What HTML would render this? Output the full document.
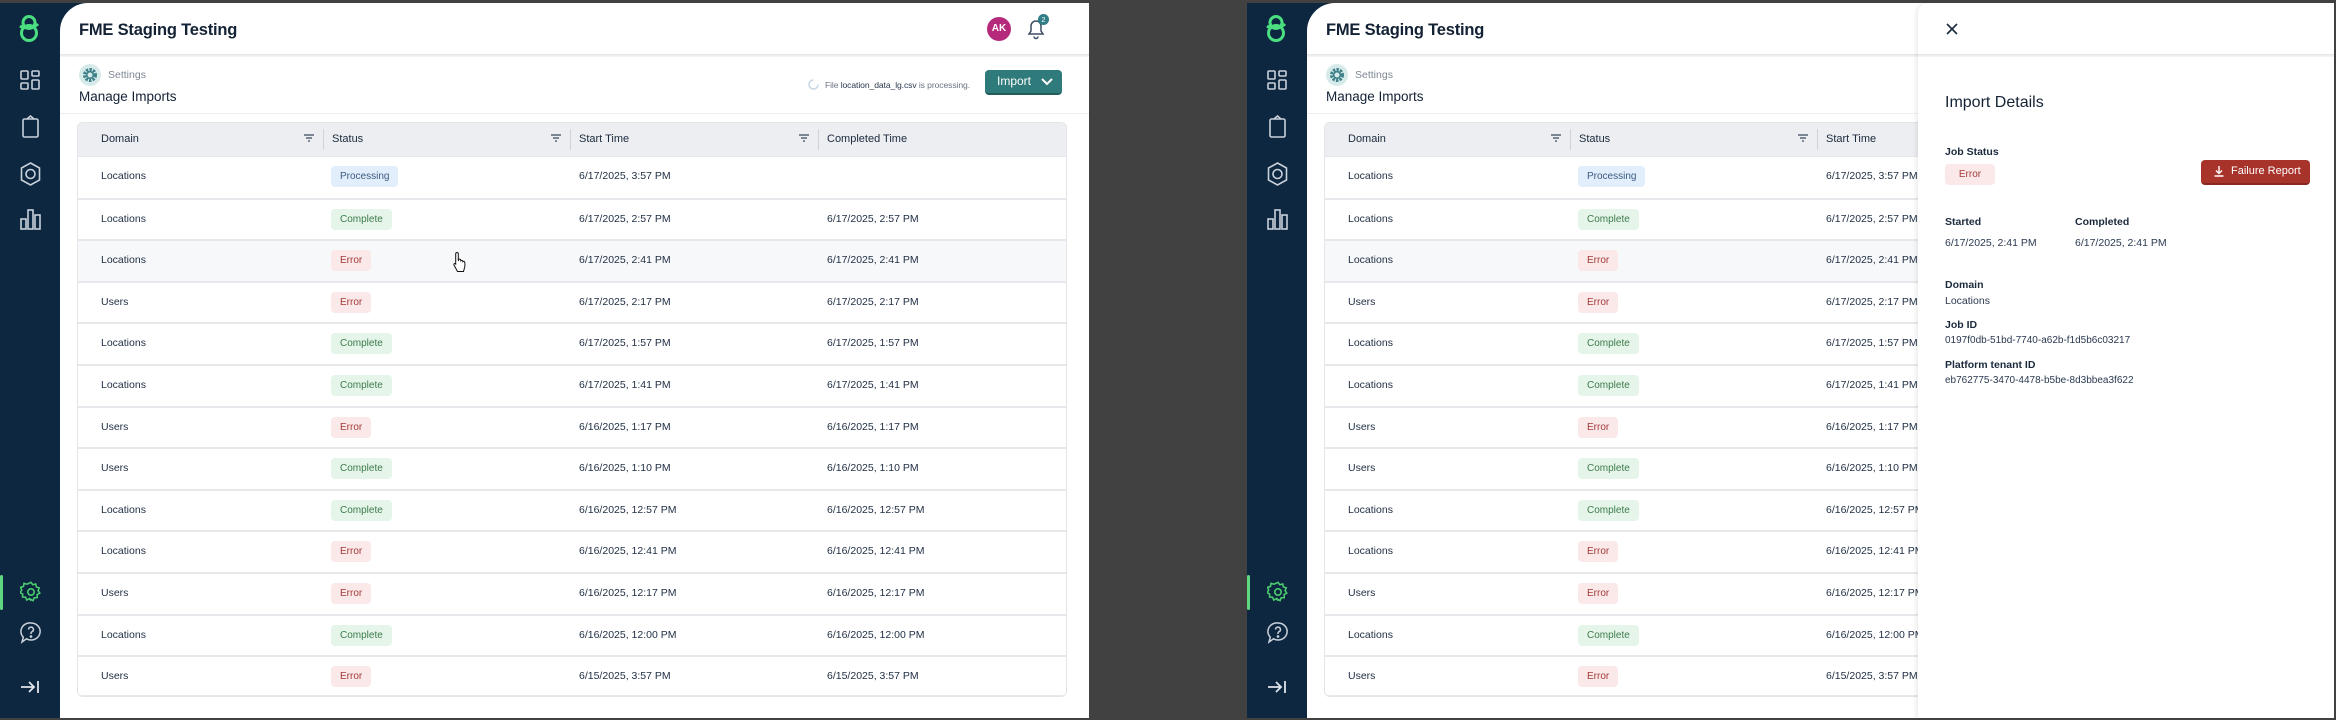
<!DOCTYPE html>
<html><head><meta charset="utf-8">
<style>
*{margin:0;padding:0;box-sizing:border-box}
body{width:2336px;height:720px;background:#414141;position:relative;overflow:hidden;font-family:"Liberation Sans",Arial,sans-serif;color:#1b2a3d}
.panel{position:absolute;top:3px;height:715px;width:1089px;background:#0e2740;overflow:hidden}
.main{position:absolute;left:60px;top:0;right:0;bottom:0;background:#fff;border-top-left-radius:28px}
.abs{position:absolute}
.hdrline{position:absolute;left:60px;right:0;top:51px;height:3px;background:linear-gradient(#e2e4e8,#f6f7f8)}
.title{position:absolute;left:79px;top:18px;font-size:16.5px;font-weight:bold;color:#142235;letter-spacing:-0.2px}
.sub{position:absolute;left:60px;right:0;top:110px;height:1px;background:#eceef1}
.table{position:absolute;left:77px;width:990px;top:119px;height:575px;border:1px solid #e3e5e9;border-radius:6px;overflow:hidden;background:#fff}
.th{position:absolute;left:0;right:0;top:0;height:33px;background:#eceef2}
.th span{position:absolute;top:10px;font-size:11px;color:#1b2a3d}
.sep{position:absolute;top:6px;width:1px;height:21px;background:#cfd3d9}
.fil{position:absolute;top:10px}
.row{position:absolute;left:0;right:0;height:41.6px;border-top:2px solid #e6e8ec}
.row span{position:absolute;top:13px;font-size:10.5px;color:#1e2d42}
.row .b{top:9px;height:21px;line-height:21px;padding:0 9px;border-radius:4px;font-size:10px}
.p{background:#e2eefb;color:#3c5a80!important}
.c{background:#e5f5e9;color:#3d7b4c!important}
.e{background:#fbe8e8;color:#a23a3a!important}
.ic{position:absolute;left:20px}
</style></head><body>

<!-- LEFT PANEL -->
<div class="panel" style="left:0">
 <svg class="abs" style="left:16px;top:11px" width="26" height="30" viewBox="0 0 26 30" fill="none" stroke="#4bde80" stroke-width="3"><circle cx="13" cy="8.5" r="6"/><circle cx="13" cy="19" r="7.5"/><path d="M4 12 C8 15 18 14 22 10"/></svg>
 <svg class="ic" style="top:67px" width="21" height="21" viewBox="0 0 21 21" fill="none" stroke="#c9d1db" stroke-width="1.6"><rect x="1" y="1" width="7" height="8" rx="1"/><rect x="12" y="1" width="7" height="5" rx="1"/><rect x="1" y="13" width="7" height="6" rx="1"/><rect x="12" y="10" width="7" height="9" rx="1"/></svg>
 <svg class="ic" style="top:112px" width="21" height="24" viewBox="0 0 21 24" fill="none" stroke="#c9d1db" stroke-width="1.6"><rect x="3" y="4" width="15" height="18" rx="1.5"/><path d="M7 4 L10.5 1 L14 4"/></svg>
 <svg class="ic" style="top:159px" width="21" height="24" viewBox="0 0 21 24" fill="none" stroke="#c9d1db" stroke-width="1.6"><path d="M10.5 1 L19.5 6 L19.5 18 L10.5 23 L1.5 18 L1.5 6 Z"/><circle cx="10.5" cy="12" r="4.5"/></svg>
 <svg class="ic" style="top:205px" width="21" height="22" viewBox="0 0 21 22" fill="none" stroke="#c9d1db" stroke-width="1.6"><rect x="1" y="11" width="5" height="10"/><rect x="8" y="2" width="5" height="19"/><rect x="15" y="7" width="5" height="14"/></svg>
 <div class="abs" style="left:0;top:572px;width:3px;height:35px;background:#5fd67f;border-radius:2px"></div>
 <svg class="ic" style="top:578px" width="22" height="22" viewBox="0 0 24 24" fill="none" stroke="#4bce6f" stroke-width="1.7"><circle cx="12" cy="12" r="3.5"/><path d="M12 1.5l2 2.6 3.2-.9.6 3.3 3.2 1-1.3 3 1.9 2.7-2.9 1.6.1 3.3-3.3.2-1.3 3.1-2.9-1.6L12 21.5l-1.7-2.3-2.9 1.6-1.3-3.1-3.3-.2.1-3.3-2.9-1.6 1.9-2.7-1.3-3 3.2-1 .6-3.3 3.2.9z"/></svg>
 <svg class="ic" style="top:618px" width="22" height="24" viewBox="0 0 22 24" fill="none" stroke="#c9d1db" stroke-width="1.5"><path d="M11 2a9 8.5 0 1 1-4.5 15.8L2 21l1.3-4.8A9 8.5 0 0 1 11 2z"/><path d="M8.6 8.5a2.4 2.4 0 1 1 3.4 2.2c-.7.4-1 .9-1 1.6v.7"/><circle cx="11" cy="15.5" r=".6" fill="#c9d1db"/></svg>
 <svg class="ic" style="top:677px" width="20" height="14" viewBox="0 0 20 14" fill="none" stroke="#dfe4ea" stroke-width="1.8"><path d="M1 7h13M9 2l5 5-5 5M18 1v12"/></svg>
 <div class="main"></div>
 <div class="hdrline"></div>
 <div class="title">FME Staging Testing</div>
 <div class="abs" style="left:987px;top:14px;width:24px;height:24px;border-radius:50%;background:#b52a7b;color:#fff;font-size:10px;font-weight:bold;text-align:center;line-height:24px">AK</div>
 <svg class="abs" style="left:1026px;top:13px" width="20" height="24" viewBox="0 0 20 24" fill="none" stroke="#3a4d63" stroke-width="1.5"><path d="M3 18h14l-2-3V10a5 5 0 0 0-10 0v5z"/><path d="M8 20.5a2 2 0 0 0 4 0"/></svg>
 <div class="abs" style="left:1038px;top:11px;width:11px;height:11px;border-radius:50%;background:#2f7d87;color:#fff;font-size:7.5px;text-align:center;line-height:11px">2</div>
 <svg class="abs" style="left:79px;top:61px" width="22" height="22" viewBox="0 0 22 22"><circle cx="11" cy="11" r="11" fill="#d6eaea"/><circle cx="11" cy="11" r="5.5" fill="none" stroke="#3e7f88" stroke-width="3" stroke-dasharray="2.4 1.2"/><circle cx="11" cy="11" r="3.3" fill="none" stroke="#3e7f88" stroke-width="1.6"/></svg>
 <div class="abs" style="left:108px;top:66px;font-size:10.5px;color:#7d8794">Settings</div>
 <div class="abs" style="left:79px;top:86px;font-size:13.5px;color:#142235">Manage Imports</div>
 <svg class="abs" style="left:808px;top:76px" width="11" height="11" viewBox="0 0 11 11" fill="none" stroke="#c7d6e2" stroke-width="1.5"><path d="M5.5 1A4.5 4.5 0 1 0 10 5.5"/></svg>
 <div class="abs" style="right:119px;top:77px;font-size:8.6px;color:#6a7482;white-space:nowrap;letter-spacing:-0.1px">File <span style="color:#2b3a4f">location_data_lg.csv</span> is processing.</div>
 <div class="abs" style="left:985px;top:67px;width:77px;height:25px;background:#2f7a7b;border-radius:4px;border-bottom:2px solid #235e5f;color:#fff;font-size:12px;line-height:23px;padding-left:12px">Import
  <svg class="abs" style="left:56px;top:8px" width="12" height="8" viewBox="0 0 12 8" fill="none" stroke="#fff" stroke-width="2"><path d="M1 1l5 5 5-5"/></svg></div>
 <div class="sub"></div>
 <div class="table">
  <div class="th">
   <span style="left:23px">Domain</span><svg class="fil" style="left:226px" width="10" height="10" viewBox="0 0 10 10" stroke="#3a4a5e" stroke-width="1.3"><path d="M0 2h10M2 5h6M4 8h2"/></svg><div class="sep" style="left:245px"></div>
   <span style="left:254px">Status</span><svg class="fil" style="left:473px" width="10" height="10" viewBox="0 0 10 10" stroke="#3a4a5e" stroke-width="1.3"><path d="M0 2h10M2 5h6M4 8h2"/></svg><div class="sep" style="left:492px"></div>
   <span style="left:501px">Start Time</span><svg class="fil" style="left:721px" width="10" height="10" viewBox="0 0 10 10" stroke="#3a4a5e" stroke-width="1.3"><path d="M0 2h10M2 5h6M4 8h2"/></svg><div class="sep" style="left:740px"></div>
   <span style="left:749px">Completed Time</span>
  </div>
  <div class="row" style="top:33px;border-top:1px solid #e6e8ec"><span style="left:23px">Locations</span><span class="b p" style="left:253px">Processing</span><span style="left:501px">6/17/2025, 3:57 PM</span></div>
  <div class="row" style="top:74.6px"><span style="left:23px">Locations</span><span class="b c" style="left:253px">Complete</span><span style="left:501px">6/17/2025, 2:57 PM</span><span style="left:749px">6/17/2025, 2:57 PM</span></div>
  <div class="row" style="top:116.2px;background:#f7f8fa"><span style="left:23px">Locations</span><span class="b e" style="left:253px">Error</span><span style="left:501px">6/17/2025, 2:41 PM</span><span style="left:749px">6/17/2025, 2:41 PM</span>
   <svg class="abs" style="left:374px;top:10px" width="16" height="22" viewBox="0 0 16 22" fill="#fff" stroke="#111" stroke-width="1"><path d="M5 1.5c.8 0 1.3.6 1.3 1.4V10l.3-1.5c.6-.7 1.8-.5 2 .4l.2.9c.5-.7 1.7-.6 2 .3v.6c.6-.6 1.7-.4 1.9.5.3 1.5.3 4-.2 5.6L11.5 20.5H5.5L2 14c-.5-.9.3-1.9 1.3-1.4L3.7 13V2.9c0-.8.5-1.4 1.3-1.4z"/></svg></div>
  <div class="row" style="top:157.8px"><span style="left:23px">Users</span><span class="b e" style="left:253px">Error</span><span style="left:501px">6/17/2025, 2:17 PM</span><span style="left:749px">6/17/2025, 2:17 PM</span></div>
  <div class="row" style="top:199.4px"><span style="left:23px">Locations</span><span class="b c" style="left:253px">Complete</span><span style="left:501px">6/17/2025, 1:57 PM</span><span style="left:749px">6/17/2025, 1:57 PM</span></div>
  <div class="row" style="top:241px"><span style="left:23px">Locations</span><span class="b c" style="left:253px">Complete</span><span style="left:501px">6/17/2025, 1:41 PM</span><span style="left:749px">6/17/2025, 1:41 PM</span></div>
  <div class="row" style="top:282.6px"><span style="left:23px">Users</span><span class="b e" style="left:253px">Error</span><span style="left:501px">6/16/2025, 1:17 PM</span><span style="left:749px">6/16/2025, 1:17 PM</span></div>
  <div class="row" style="top:324.2px"><span style="left:23px">Users</span><span class="b c" style="left:253px">Complete</span><span style="left:501px">6/16/2025, 1:10 PM</span><span style="left:749px">6/16/2025, 1:10 PM</span></div>
  <div class="row" style="top:365.8px"><span style="left:23px">Locations</span><span class="b c" style="left:253px">Complete</span><span style="left:501px">6/16/2025, 12:57 PM</span><span style="left:749px">6/16/2025, 12:57 PM</span></div>
  <div class="row" style="top:407.4px"><span style="left:23px">Locations</span><span class="b e" style="left:253px">Error</span><span style="left:501px">6/16/2025, 12:41 PM</span><span style="left:749px">6/16/2025, 12:41 PM</span></div>
  <div class="row" style="top:449px"><span style="left:23px">Users</span><span class="b e" style="left:253px">Error</span><span style="left:501px">6/16/2025, 12:17 PM</span><span style="left:749px">6/16/2025, 12:17 PM</span></div>
  <div class="row" style="top:490.6px"><span style="left:23px">Locations</span><span class="b c" style="left:253px">Complete</span><span style="left:501px">6/16/2025, 12:00 PM</span><span style="left:749px">6/16/2025, 12:00 PM</span></div>
  <div class="row" style="top:532.2px;border-bottom:2px solid #e6e8ec"><span style="left:23px">Users</span><span class="b e" style="left:253px">Error</span><span style="left:501px">6/15/2025, 3:57 PM</span><span style="left:749px">6/15/2025, 3:57 PM</span></div>
 </div>
</div>

<!-- RIGHT PANEL -->
<div class="panel" style="left:1247px;width:1087px">
 <svg class="abs" style="left:16px;top:11px" width="26" height="30" viewBox="0 0 26 30" fill="none" stroke="#4bde80" stroke-width="3"><circle cx="13" cy="8.5" r="6"/><circle cx="13" cy="19" r="7.5"/><path d="M4 12 C8 15 18 14 22 10"/></svg>
 <svg class="ic" style="top:67px" width="21" height="21" viewBox="0 0 21 21" fill="none" stroke="#c9d1db" stroke-width="1.6"><rect x="1" y="1" width="7" height="8" rx="1"/><rect x="12" y="1" width="7" height="5" rx="1"/><rect x="1" y="13" width="7" height="6" rx="1"/><rect x="12" y="10" width="7" height="9" rx="1"/></svg>
 <svg class="ic" style="top:112px" width="21" height="24" viewBox="0 0 21 24" fill="none" stroke="#c9d1db" stroke-width="1.6"><rect x="3" y="4" width="15" height="18" rx="1.5"/><path d="M7 4 L10.5 1 L14 4"/></svg>
 <svg class="ic" style="top:159px" width="21" height="24" viewBox="0 0 21 24" fill="none" stroke="#c9d1db" stroke-width="1.6"><path d="M10.5 1 L19.5 6 L19.5 18 L10.5 23 L1.5 18 L1.5 6 Z"/><circle cx="10.5" cy="12" r="4.5"/></svg>
 <svg class="ic" style="top:205px" width="21" height="22" viewBox="0 0 21 22" fill="none" stroke="#c9d1db" stroke-width="1.6"><rect x="1" y="11" width="5" height="10"/><rect x="8" y="2" width="5" height="19"/><rect x="15" y="7" width="5" height="14"/></svg>
 <div class="abs" style="left:0;top:572px;width:3px;height:35px;background:#5fd67f;border-radius:2px"></div>
 <svg class="ic" style="top:578px" width="22" height="22" viewBox="0 0 24 24" fill="none" stroke="#4bce6f" stroke-width="1.7"><circle cx="12" cy="12" r="3.5"/><path d="M12 1.5l2 2.6 3.2-.9.6 3.3 3.2 1-1.3 3 1.9 2.7-2.9 1.6.1 3.3-3.3.2-1.3 3.1-2.9-1.6L12 21.5l-1.7-2.3-2.9 1.6-1.3-3.1-3.3-.2.1-3.3-2.9-1.6 1.9-2.7-1.3-3 3.2-1 .6-3.3 3.2.9z"/></svg>
 <svg class="ic" style="top:618px" width="22" height="24" viewBox="0 0 22 24" fill="none" stroke="#c9d1db" stroke-width="1.5"><path d="M11 2a9 8.5 0 1 1-4.5 15.8L2 21l1.3-4.8A9 8.5 0 0 1 11 2z"/><path d="M8.6 8.5a2.4 2.4 0 1 1 3.4 2.2c-.7.4-1 .9-1 1.6v.7"/><circle cx="11" cy="15.5" r=".6" fill="#c9d1db"/></svg>
 <svg class="ic" style="top:677px" width="20" height="14" viewBox="0 0 20 14" fill="none" stroke="#dfe4ea" stroke-width="1.8"><path d="M1 7h13M9 2l5 5-5 5M18 1v12"/></svg>
 <div class="main"></div>
 <div class="hdrline"></div>
 <div class="title">FME Staging Testing</div>
 <svg class="abs" style="left:79px;top:61px" width="22" height="22" viewBox="0 0 22 22"><circle cx="11" cy="11" r="11" fill="#d6eaea"/><circle cx="11" cy="11" r="5.5" fill="none" stroke="#3e7f88" stroke-width="3" stroke-dasharray="2.4 1.2"/><circle cx="11" cy="11" r="3.3" fill="none" stroke="#3e7f88" stroke-width="1.6"/></svg>
 <div class="abs" style="left:108px;top:66px;font-size:10.5px;color:#7d8794">Settings</div>
 <div class="abs" style="left:79px;top:86px;font-size:13.5px;color:#142235">Manage Imports</div>
 <div class="sub"></div>
 <div class="table">
  <div class="th">
   <span style="left:23px">Domain</span><svg class="fil" style="left:226px" width="10" height="10" viewBox="0 0 10 10" stroke="#3a4a5e" stroke-width="1.3"><path d="M0 2h10M2 5h6M4 8h2"/></svg><div class="sep" style="left:245px"></div>
   <span style="left:254px">Status</span><svg class="fil" style="left:473px" width="10" height="10" viewBox="0 0 10 10" stroke="#3a4a5e" stroke-width="1.3"><path d="M0 2h10M2 5h6M4 8h2"/></svg><div class="sep" style="left:492px"></div>
   <span style="left:501px">Start Time</span>
  </div>
  <div class="row" style="top:33px;border-top:1px solid #e6e8ec"><span style="left:23px">Locations</span><span class="b p" style="left:253px">Processing</span><span style="left:501px">6/17/2025, 3:57 PM</span></div>
  <div class="row" style="top:74.6px"><span style="left:23px">Locations</span><span class="b c" style="left:253px">Complete</span><span style="left:501px">6/17/2025, 2:57 PM</span></div>
  <div class="row" style="top:116.2px;background:#f7f8fa"><span style="left:23px">Locations</span><span class="b e" style="left:253px">Error</span><span style="left:501px">6/17/2025, 2:41 PM</span></div>
  <div class="row" style="top:157.8px"><span style="left:23px">Users</span><span class="b e" style="left:253px">Error</span><span style="left:501px">6/17/2025, 2:17 PM</span></div>
  <div class="row" style="top:199.4px"><span style="left:23px">Locations</span><span class="b c" style="left:253px">Complete</span><span style="left:501px">6/17/2025, 1:57 PM</span></div>
  <div class="row" style="top:241px"><span style="left:23px">Locations</span><span class="b c" style="left:253px">Complete</span><span style="left:501px">6/17/2025, 1:41 PM</span></div>
  <div class="row" style="top:282.6px"><span style="left:23px">Users</span><span class="b e" style="left:253px">Error</span><span style="left:501px">6/16/2025, 1:17 PM</span></div>
  <div class="row" style="top:324.2px"><span style="left:23px">Users</span><span class="b c" style="left:253px">Complete</span><span style="left:501px">6/16/2025, 1:10 PM</span></div>
  <div class="row" style="top:365.8px"><span style="left:23px">Locations</span><span class="b c" style="left:253px">Complete</span><span style="left:501px">6/16/2025, 12:57 PM</span></div>
  <div class="row" style="top:407.4px"><span style="left:23px">Locations</span><span class="b e" style="left:253px">Error</span><span style="left:501px">6/16/2025, 12:41 PM</span></div>
  <div class="row" style="top:449px"><span style="left:23px">Users</span><span class="b e" style="left:253px">Error</span><span style="left:501px">6/16/2025, 12:17 PM</span></div>
  <div class="row" style="top:490.6px"><span style="left:23px">Locations</span><span class="b c" style="left:253px">Complete</span><span style="left:501px">6/16/2025, 12:00 PM</span></div>
  <div class="row" style="top:532.2px;border-bottom:2px solid #e6e8ec"><span style="left:23px">Users</span><span class="b e" style="left:253px">Error</span><span style="left:501px">6/15/2025, 3:57 PM</span></div>
 </div>
 <!-- drawer -->
 <div class="abs" style="left:671px;top:0;width:416px;height:715px;background:#fff;border-top-left-radius:10px;box-shadow:-2px 0 4px rgba(0,0,0,0.08)">
  <div class="abs" style="left:0;right:0;top:51px;height:3px;background:linear-gradient(#e2e4e8,#f6f7f8)"></div>
  <svg class="abs" style="left:28px;top:20px" width="12" height="12" viewBox="0 0 12 12" stroke="#1b2a3d" stroke-width="1.6"><path d="M1 1l10 10M11 1L1 11"/></svg>
  <div class="abs" style="left:27px;top:91px;font-size:16px;color:#142235">Import Details</div>
  <div class="abs" style="left:27px;top:143px;font-size:10.5px;font-weight:bold">Job Status</div>
  <div class="abs" style="left:27px;top:161px;width:50px;height:21px;line-height:21px;text-align:center;background:#fbe8e8;color:#a23a3a;font-size:10px;border-radius:4px">Error</div>
  <div class="abs" style="left:283px;top:157px;width:109px;height:25px;background:#a8332b;border-radius:4px;border-bottom:2px solid #8a2620;color:#fff;font-size:11px;line-height:23px;padding-left:30px">Failure Report
   <svg class="abs" style="left:13px;top:6px" width="10" height="11" viewBox="0 0 10 11" fill="none" stroke="#fff" stroke-width="1.4"><path d="M5 0v7M2 4.5l3 3 3-3M0.5 10h9"/></svg></div>
  <div class="abs" style="left:27px;top:213px;font-size:10.5px;font-weight:bold">Started</div>
  <div class="abs" style="left:157px;top:213px;font-size:10.5px;font-weight:bold">Completed</div>
  <div class="abs" style="left:27px;top:234px;font-size:10.5px;color:#2a3950">6/17/2025, 2:41 PM</div>
  <div class="abs" style="left:157px;top:234px;font-size:10.5px;color:#2a3950">6/17/2025, 2:41 PM</div>
  <div class="abs" style="left:27px;top:276px;font-size:10.5px;font-weight:bold">Domain</div>
  <div class="abs" style="left:27px;top:292px;font-size:10.5px;color:#2a3950">Locations</div>
  <div class="abs" style="left:27px;top:316px;font-size:10.5px;font-weight:bold">Job ID</div>
  <div class="abs" style="left:27px;top:332px;font-size:10px;color:#2a3950">0197f0db-51bd-7740-a62b-f1d5b6c03217</div>
  <div class="abs" style="left:27px;top:356px;font-size:10.5px;font-weight:bold">Platform tenant ID</div>
  <div class="abs" style="left:27px;top:372px;font-size:10px;color:#2a3950">eb762775-3470-4478-b5be-8d3bbea3f622</div>
 </div>
</div>
</body></html>
